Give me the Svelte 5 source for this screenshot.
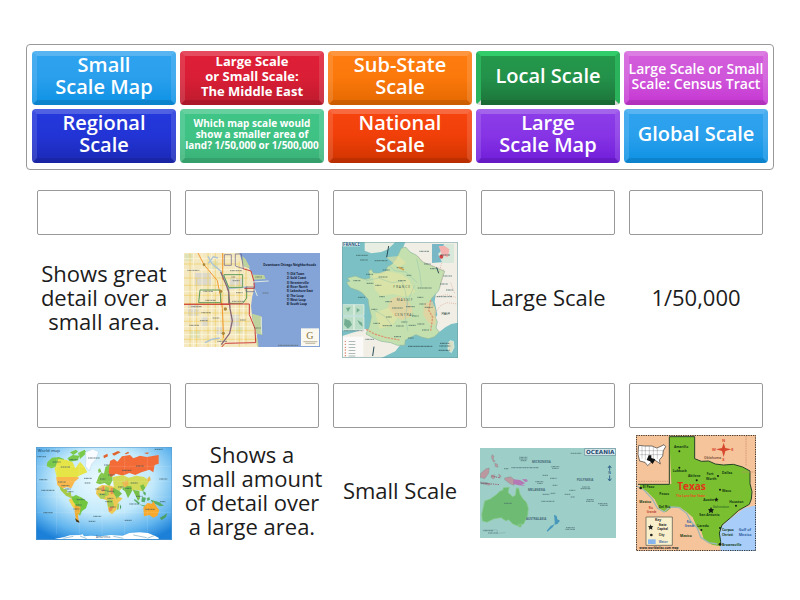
<script>
	let selected = $state(null);

	const tiles = [
		{ lines: ['Small', 'Scale Map'], size: 'large', color: 'sky' },
		{ lines: ['Large Scale', 'or Small Scale:', 'The Middle East'], size: 'compact', color: 'crimson' },
		{ lines: ['Sub-State', 'Scale'], size: 'large', color: 'orange' },
		{ lines: ['Local Scale'], size: 'large', color: 'green' },
		{ lines: ['Large Scale or Small', 'Scale: Census Tract'], size: 'medium', color: 'orchid' },
		{ lines: ['Regional', 'Scale'], size: 'large', color: 'blue' },
		{ lines: ['Which map scale would', 'show a smaller area of', 'land? 1/50,000 or 1/500,000'], size: 'small', color: 'mint' },
		{ lines: ['National', 'Scale'], size: 'large', color: 'red' },
		{ lines: ['Large', 'Scale Map'], size: 'large', color: 'violet' },
		{ lines: ['Global Scale'], size: 'large', color: 'sky' }
	];

	const prompts = [
		{ text: 'Shows great detail over a small area.' },
		{ map: 'chicago' },
		{ map: 'france' },
		{ text: 'Large Scale' },
		{ text: '1/50,000' },
		{ map: 'world' },
		{ text: 'Shows a small amount of detail over a large area.' },
		{ text: 'Small Scale' },
		{ map: 'oceania' },
		{ map: 'texas' }
	];

	// [x, y, width] of place names too small to read
	const franceNames = [[60, 58, 36], [72, 72, 24], [116, 74, 38], [140, 102, 22], [182, 95, 20], [90, 115, 22], [52, 134, 22], [128, 123, 26], [92, 142, 20], [118, 148, 18], [186, 134, 24], [212, 118, 14], [245, 156, 42], [264, 84, 20], [282, 98, 20], [168, 216, 32], [148, 197, 20], [210, 212, 26], [250, 204, 20], [266, 214, 24], [106, 220, 18], [150, 243, 18], [112, 262, 20], [140, 269, 28], [180, 270, 24], [228, 240, 20], [218, 268, 22], [244, 264, 22], [258, 282, 22], [174, 302, 22], [196, 258, 18], [250, 46, 30], [322, 120, 26], [312, 144, 24], [330, 162, 22], [302, 182, 46], [88, 310, 26], [216, 306, 18], [318, 232, 24], [66, 184, 22], [244, 184, 18], [130, 182, 16]];
	const worldNames = [[68, 63, 24], [92, 78, 28], [118, 56, 24], [174, 51, 36], [84, 123, 24], [94, 134, 24], [162, 112, 24], [164, 126, 18], [28, 116, 24], [34, 148, 40], [40, 215, 28], [190, 226, 24], [284, 238, 22], [176, 241, 20], [298, 189, 30], [388, 114, 24], [390, 182, 16], [346, 205, 28], [276, 88, 28], [318, 75, 24], [302, 126, 22], [222, 72, 14], [234, 102, 20], [210, 114, 16], [196, 144, 18], [214, 148, 18], [232, 151, 22], [210, 160, 16], [232, 172, 18], [226, 182, 20], [240, 198, 18], [140, 176, 24], [138, 192, 18], [264, 138, 18], [286, 142, 18], [112, 152, 18], [106, 144, 16], [318, 166, 20], [374, 25, 24], [130, 204, 18], [22, 47, 26]];
	const oceaniaNames = [[130, 46, 24], [130, 51, 24], [134, 56, 18], [226, 74, 24], [228, 79, 20], [200, 100, 16], [222, 109, 20], [178, 119, 24], [184, 124, 16], [230, 130, 14], [200, 157, 20], [224, 154, 14], [196, 178, 40], [280, 145, 18], [266, 157, 18], [284, 165, 12], [318, 135, 24], [314, 140, 30], [332, 173, 22], [330, 178, 24], [366, 185, 28], [372, 190, 24], [270, 257, 26], [268, 262, 30], [84, 184, 24], [284, 34, 32], [14, 124, 22], [22, 266, 30], [36, 273, 30], [84, 80, 14], [106, 77, 82]];
	const texasCities = [
		['Amarillo', 132, 54], ['Lubbock', 128, 125], ['Abilene', 174, 142], ['Fort', 230, 136],
		['Worth', 228, 151], ['Dallas', 276, 132], ['El Paso', 38, 175], ['Waco', 276, 186],
		['Austin', 220, 214], ['Houston', 298, 220], ['San Antonio', 208, 258], ['Laredo', 202, 292],
		['Corpus', 276, 303], ['Christi', 276, 317], ['Brownsville', 276, 347], ['Mexico', 28, 219],
		['Mexico', 150, 320], ['Pecos', 88, 195], ['Del Rio', 86, 235]
	];
	const districts = ['1) Old Town', '2) Gold Coast', '3) Streeterville', '4) River North', '5) Lakeshore East', '6) The Loop', '7) West Loop', '8) South Loop'];

	function toggle(index) {
		selected = selected === index ? null : index;
	}
</script>

{#snippet names(list, color)}
	<g stroke={color} stroke-width="3" stroke-dasharray="4 1 7 1 3 1" opacity="0.65">
		{#each list as [x, y, w]}
			<line x1={x} y1={y} x2={x + w} y2={y} />
		{/each}
	</g>
{/snippet}

{#snippet chicago()}
	<svg class="map wide" viewBox="12 15 408 282" role="img" aria-label="Chicago neighborhoods">
		<path fill="#f3e8bf" d="M12 15h408v282H12z" />
		<path fill="#84a3d6" d="M178 15l6 18 8 22 14 4 12 20 5 45-6 20-4 30 4 36 12 40 6 47h185V15z" />
		<path fill="#dcd9cc" d="M45 75h50v38H45zM150 90h38v24h-38zM24 165h32v38H24zM150 200h30v38h-30zM64 206h20v28H64zM110 236h18v26h-18z" />
		<path fill="#dfe2b8" d="M14 18h24v20H14zM92 40h22v24H92zM30 248h30v22H30zM164 236h24v20h-24z" />
		<path fill="#bdd29c" d="M186 24l10 8 14 26-8 2-14-10zM218 80l34 1 5 12-37 2zM216 197l28 8 3 56-16-4-10-22zM222 248l14 40-4 9z" />
		<g fill="none" stroke="#efcf62" stroke-width="2">
			<path d="M12 48h165M12 90h190M12 112h175M12 142h200M12 195h195M12 220h200M12 248h210M12 274h220" />
			<path d="M30 15v282M50 90v207M84 15v282M106 15v282M128 15v282M178 40v257M198 60v230" />
		</g>
		<g fill="none" stroke="#fff9df" stroke-width="2">
			<path d="M12 32h160M12 65h180M12 130h190M12 182h190M12 207h200M12 236h210M12 260h220M12 286h215" />
			<path d="M40 15v282M66 15v282M95 15v282M118 100v197M166 30v260M190 80v210" />
		</g>
		<path fill="none" stroke="#a9c3d9" stroke-width="4" d="M84 25l12 22 26 22 15 28 8 24M85 46l15-20 14 4M142 122l60-5M75 284l20-10 24-4" />
		<path fill="none" stroke="#f39a35" stroke-width="3" d="M54 15l18 35 40 48 9 45 6 38 4 90M12 168h110M128 15v80" />
		<path fill="none" stroke="#5f9a58" stroke-width="3" d="M132 80h56v38h-42l-14-34zM60 126h62v38H56zM146 122v44h42l12-16V120" />
		<path fill="none" stroke="#8a6876" stroke-width="4" d="M122 72l18 42 6 18 4 50 7 36-8 38-25 34" />
		<path fill="none" stroke="#cb3d38" stroke-width="3" d="M189 62l24 7 9 32 1 20h-30M120 168h88v32l17 42 2 42-92 2-10 11M12 169h138" />
		<path fill="none" stroke="#665c86" stroke-width="2" d="M133 20h21v32h-21zM166 18h18l6 44-24-8zM198 117h24v14h-24z" />
		<path fill="none" stroke="#dce9df" stroke-width="3" d="M218 102l48-3M224 124l8 20M244 207v50" />
		{@render names([[22, 67, 36], [70, 130, 30], [76, 157, 32], [150, 68, 36], [158, 98, 22], [168, 134, 20], [156, 160, 38], [34, 176, 32], [64, 194, 28], [28, 232, 30], [60, 218, 24], [98, 210, 20], [180, 216, 18], [112, 280, 30], [154, 87, 12], [226, 87, 20], [248, 135, 18], [222, 240, 22], [294, 292, 60]], '#59605b')}
		<g fill="#aa883c">
			<circle cx="122" cy="130" r="5" /><circle cx="136" cy="183" r="5" /><circle cx="72" cy="50" r="4" /><circle cx="130" cy="256" r="5" />
		</g>
		<g class="heavy" fill="#101b35" font-size="9">
			<text x="250" y="54">Downtown Chicago Neighborhoods</text>
			{#each districts as district, i}
				<text x="320" y={81 + i * 13}>{district}</text>
			{/each}
		</g>
		<path fill="#fbf9ef" d="M363 241h54v53h-54z" />
		<text class="serif" x="379" y="273" font-size="30" fill="#88733b">G</text>
		<path stroke="#9d9477" stroke-width="2" d="M370 281h42M376 286h30" />
	</svg>
{/snippet}

{#snippet france()}
	<svg class="map square" viewBox="18 18 348 348" role="img" aria-label="Map of France">
		<path fill="#7ac0c4" d="M18 18h348v348H18z" />
		<path fill="#f1eee6" d="M208 18h158v242l-20 4-18 10-18 14-14-6-6-20 14-26-8-40 6-40 20-52-34-10-28-14-14-16-20-14-26-12z" />
		<path fill="#e8eee1" d="M86 18h92l-22 22-20 8-30 4-20-8z" />
		<path fill="#f1eee6" d="M18 300l70-22 40 18 60 12 10 12-20 26-42 20H18z" />
		<path fill="#c4e0ae" stroke="#8fb8a0" stroke-width="2" d="M196 36l14-2 12 14 20 10 18 20 24 10 22 10 20 8-10 30-8 28-22 24-2 18 14 8-2 24 8 20-4 18 10 12-14 14-18 6-20-4-18-8-16 8-16 8-2 16-22 0-20-8-28-4-20-8-26-14 10-22 6-30-6-26-4-26-16-18-12-8-24-8-10-12-2-6 10-2-8-10 24-6 16 6 14 4 14-4-4-22 8-4 6 10 22 2 16-6 4-14 14-8 12-14z" />
		<path fill="#e7e5a1" opacity=".6" d="M110 118l40-14 46 10 24 18 18 36-28 14-40-8-36 6-18-20zM118 230l42-16 28 26-20 30-38 8zM150 64l38-4 22 20-22 14z" />
		<path fill="#edcf9c" opacity=".65" d="M164 188l24-8 28 12 14 30-8 22-24 8-24-12-18-28zM264 202l26-6 10 30-2 42-20-8-16-24z" />
		<path fill="none" stroke="#dc9874" stroke-width="4" stroke-dasharray="7 3" d="M90 280l26 14 32 10 42 8M284 192l-6 30 12 22-6 40" />
		<path fill="none" stroke="#78b7b4" stroke-width="1" d="M90 134l38-8 38 14 32-4 10 30 6 48M114 222l34 20 20 28M146 76l30 28 34 4 34 32M216 286l-8-40 8-54 20-44M242 68l10 46 4 38" />
		<path fill="none" stroke="#d8a793" stroke-width="2" stroke-dasharray="3 3" d="M244 60l20 20 60 22-12 52M320 70l-10 38M344 140l12 32M292 184l40-8 28 8M298 230l14-20 20-10 34 4" />
		{@render names(franceNames, '#355b57')}
		<g fill="#485b50" font-size="10">
			<text x="172" y="156">F R A N C E</text>
			<text x="182" y="196">M A S S I F</text>
			<text x="176" y="241">C E N T R A L</text>
			<text x="316" y="236">ITALY</text>
		</g>
		<path stroke="#d0a54f" stroke-width="5" d="M188 94l16 8" />
		<path stroke="#284c55" stroke-width="3" d="M152 64l6-34M110 360l4-28M302 94l6 18" />
		<path fill="#d8e8da" d="M288 24h66v57h-66z" />
		<path fill="#79b7c6" d="M288 24h36l-6 18-12 12 12 24-30 3z" />
		<path fill="#f3b2ad" d="M308 30h18l14 10-4 24-18-6z" />
		<circle cx="316" cy="62" r="6" fill="#d44546" />
		<path fill="#d8dec4" stroke="#e9f5ed" stroke-width="2" d="M342 314l10 2 2 18-8 16-10-8v-20z" />
		{@render names([[312, 322, 28], [310, 330, 34], [308, 343, 34], [216, 331, 74], [314, 57, 28], [24, 284, 58]], '#263f46')}
		<g fill="#b9ddc6" stroke="#edf5ec" stroke-width="2">
			<path d="M20 206h34v32H20zM54 206h30v32H54zM20 242h34v40H20zM54 242h30v40H54z" />
		</g>
		<path fill="#72ad91" d="M26 248l16 6 6 12-12 12-12-12zM62 216l10 6-10 8zM64 252l14 8 2 12-10-8zM30 216l14-2-8 14z" />
		<path fill="#fff" opacity=".7" d="M20 302h62v60H20z" />
		<g fill="#d97155">
			{#each [316, 325, 334, 342, 351, 359] as y}
				<circle cx="28" cy={y} r="2" />
				<path fill="#879b97" d="M38 {y}h20v2H38z" />
			{/each}
		</g>
		<path fill="#e5f3ef" d="M18 18h54v13H18z" />
		<text class="heavy" x="21" y="30" font-size="13" fill="#26507f">FRANCE</text>
		<path fill="none" stroke="#6aa0a4" stroke-width="2" d="M19 19h346v346H19z" />
	</svg>
{/snippet}

{#snippet world()}
	<svg class="map wide" viewBox="18 18 408 279" role="img" aria-label="World map">
		<defs>
			<radialGradient id="ocean" cx="50%" cy="36%" r="72%">
				<stop offset="0" stop-color="#eefbff" />
				<stop offset=".5" stop-color="#c2e9fb" />
				<stop offset=".8" stop-color="#62b5ee" />
				<stop offset="1" stop-color="#1c80d8" />
			</radialGradient>
		</defs>
		<path fill="url(#ocean)" d="M18 18h408v279H18z" />
		<path fill="#79c94a" d="M52 64l14-14 20-2 16 6v18l-18 4-20 6-14-6zM112 52l16-10 20 2-4 14-24 4zM144 36l20-10 6 10-20 18zM120 34l18-8 6 6-14 10z" />
		<path fill="#e6e548" d="M84 54l24 2 20 8 8 18 14-20 12 14 10 18-20 8-14 8-58-2-6-24 6-16z" />
		<path fill="#f8b84b" d="M78 108h62l8 2-14 12-10 20-14-4-14 6-14-12z" />
		<path fill="#a7ca46" d="M88 136l14 8 10 2-2 10 12-4 2 12 8 4-4 6-20-10-16-16z" />
		<path fill="#f8fbff" stroke="#bddbed" stroke-width="2" d="M166 34l22-10 18 8-8 24-12 12-8 22-12-14 2-24z" />
		<path fill="#72c63f" d="M126 168l12-6 18 8 18 14-6 18-12 8-6 14-12-12-4-24-10-8z" />
		<path fill="#f1d54b" d="M116 176l8-4 12 20 2 14-10-8z" />
		<path fill="#eeae36" d="M134 192l18 6-2 16-6 8 2 18-8-4-4-22z" />
		<path fill="#4b371b" d="M135 232l12 8 2 5-10-3z" />
		<path fill="#82c64b" d="M206 106l8-12 8 4 4-20 14-10 6 12 2 38-10 18-14-10-14 4-12-4zM204 86l6-4 4 10-8 4z" />
		<path fill="#edc853" d="M200 142l16-10 26 2 16 6 10 28 10 4-14 14-6 22-12 12-10-8-6-34-22-8-10-12z" />
		<path fill="#a5cc51" d="M226 136l12 4-2 22-14 6zM204 156l18 2 4 14-14 2zM232 174l16 2 4 20-18 2zM258 150l10 18-10 6zM262 190l6-4-2 18-6 4z" />
		<path fill="#e88e51" d="M242 140l14 2 2 14-16 4zM214 140l8-6 2 14-8 4zM236 200l14-4-4 12-8 4z" />
		<path fill="#f36b37" d="M240 60l12-6 10 8 14-16 24-4 10 10 20-8 20 4 36-6v26l-12 4-4 22-12-8-24 8-18 8-18-6-20 8-20-6-16 10-6-14z" />
		<path fill="#e0642e" d="M220 44l12-6 2 8-12 6zM246 38l18-8 8 4-20 10zM284 38l10-6 4 4-10 4zM342 36l14-2-2 6z" />
		<path fill="#d2da58" d="M248 108l30-6 18 8 22-6 24 4 16 12-10 18-14 12-18-4-16 4-20-12-12 12-16-10z" />
		<path fill="#79bf47" d="M286 134l18 2 2 14-12 22-8-20-10-8zM308 146l20 4 2 22-6 8-8-18zM330 134l10-4 6 10-8 12zM250 140l18 10 8 8-16 14-12-20z" />
		<path fill="#e9b74e" d="M276 124l18-6 2 14-12 8zM352 112l8-6 2 12-10 6z" />
		<path fill="#58ae68" d="M314 174l16 12-4 4-14-12zM336 168l12 2-4 14-10-2zM350 172l8-4 2 8-8 4zM326 190l22 4-4 3zM362 176l26 8 14 10-12 2-24-12zM340 150l8 6-2 8-6-6z" />
		<path fill="#f6a92d" d="M340 200l12-14 14 2 4-8 8 14 10 14-6 16-12 6-12-8-16 4z" />
		<path fill="#4b9f62" d="M390 230l14-8 8-6-4 12-14 10zM270 190l4 8-4 8z" />
		<g fill="none" stroke="#fff" opacity=".35" stroke-width="1">
			<path d="M18 76h408M18 122h408M18 168h408M18 214h408M80 18v262M148 18v262M216 18v262M284 18v262M352 18v262" />
		</g>
		{@render names(worldNames, '#304f58')}
		<path fill="#fff" d="M76 293l24-4 20-6 30-1 8-2 4 6 20-2 30 2 30-4 36 2 20-8 30-2 26 2 20 8 12 6v4H76z" />
		<path stroke="#77abc7" stroke-width="2" d="M100 292l30-6M150 285l20 8M250 286l30 6M310 282l40 8M372 284l-20 8" />
		<path fill="none" stroke="#5b9ccb" stroke-width="2" d="M19 19h406v277H19z" />
		<text x="23" y="33" font-size="13" fill="#173a56">World map</text>
		<text x="198" y="292" font-size="9" fill="#2a4964">Antarctica</text>
	</svg>
{/snippet}

{#snippet oceania()}
	<svg class="map wide" viewBox="12 18 408 270" role="img" aria-label="Map of Oceania">
		<path fill="#9dcec8" d="M12 18h408v270H12z" />
		<path fill="#6ebc73" stroke="#8dcb91" stroke-width="2" d="M26 177l18-7 18-13 10-10 8-2 2 -8 18-1-4 15 14 13 8-4 3-22 7 1 4 17 8 13 12 13 5 17-2 22-12 25-17 6-16-6-12-13-8 4-15-10-22 4-20 10-14-4-2-20zM127 246l10 0-2 9-7 0z" />
		<path fill="#b9989f" stroke="#7f8a8d" stroke-width="1" d="M14 94l16-14 10-2-2 16-12 16-14-4zM46 100l10-2-4 5 8 0-8 8-6-4zM68 96l8 6-6 6zM86 108l18-4 10 8v18l-12-5-16-12zM12 120l18 2 14 5-4 3-24-5zM48 38l6 4-2 10 6 6-6 2-6-14zM56 64l8 2 2 10-8-2z" />
		<path fill="#b678b4" d="M112 112l20 2 16 10-10 3 10 4-20-1-16-4zM138 112l14 0 4 6-8 2z" />
		<path stroke="#9a6578" stroke-width="3" stroke-dasharray="4 3" d="M46 102l28 6M30 124l40 4" />
		<path fill="#4898bd" d="M234 218l8 4 2 10 8 4-8 10-8 2 0-12zM236 246l-6 10-16 13-2-3 12-14z" />
		{@render names(oceaniaNames, '#45646a')}
		<g class="heavy" fill="#466a78" font-size="9">
			<text x="168" y="63">MICRONESIA</text>
			<text x="156" y="147">MELANESIA</text>
			<text x="302" y="118">POLYNESIA</text>
			<text x="150" y="234">AUSTRALASIA</text>
		</g>
		<path stroke="#31668a" stroke-width="3" d="M401 72v14M401 100v16M396 78l5-7 5 7M396 110l5 7 5-7" fill="none" />
		<text class="heavy" x="397" y="97" font-size="10" fill="#31668a">N</text>
		<path fill="none" stroke="#6a9293" d="M20 264l44 0 0 10 24-2" />
		<path fill="#e4f0f2" stroke="#5c8794" stroke-width="2" d="M326 20h93v20h-93z" />
		<text class="title" x="330" y="36" font-size="17" fill="#244d72">OCEANIA</text>
	</svg>
{/snippet}

{#snippet texas()}
	<svg class="map tall" viewBox="18 15 360 348" role="img" aria-label="Map of Texas">
		<path fill="#f6c49a" d="M18 15h360v348H18z" />
		<path fill="#a8cdf8" d="M378 226l-34 8-22 16-26 20-22 20-8 26 6 47h106z" />
		<path fill="#79bf2f" d="M118 20h76v66l20 8 22-1 20 9 24 3 30-2 28 8 22 12 0 38 6 24-2 22-6 16-32 18-24 22-26 22-8 24 4 26 0 14-26-5-24-14-8-26-14-14-12-28-18-16-20-14-22-2-20 16-20-10-14-28-24-24-20-10v-12h94z" />
		<path fill="none" stroke="#9eb8b4" stroke-width="4" d="M20 168l22 12 24 26 16 28 20 12 18-15 26 1 24 18 14 26 18 18 10 28 24 16 26 4" />
		<path fill="none" stroke="#254328" stroke-width="3" d="M24 163h94V20h76v66l20 8 22-1 20 9 24 3 30-2 28 8 22 12 0 38 6 24-2 22-6 16-32 18-24 22-26 22-8 24 4 26v12" />
		<path fill="none" stroke="#c58d70" stroke-width="2" stroke-dasharray="5 2" d="M348 18v90M336 126h40M26 154h90" />
		<path fill="#fff" stroke="#373737" stroke-width="2" d="M26 46l18 2 22 0 14 6 10-4 12-6 5 6-7 12-2 16-10 12 3 12-6-5-10-6-14 8-8 8-8-10-16-4-5-20z" />
		<path stroke="#666" stroke-width="1" fill="none" d="M36 48v38M46 48v42M58 48v38M70 50v38M82 55v32M28 62h74M28 74h70" />
		<path fill="#111" d="M56 76h8v8l12 4-8 14-8-8-10-4z" />
		<g class="heavy" fill="#123812" font-size="10">
			{#each texasCities as [name, x, y]}
				<text {x} {y}>{name}</text>
			{/each}
			<text x="222" y="88" fill="#865b43">Oklahoma</text>
			<text x="248" y="235" fill="#3f7d25">Galveston</text>
		</g>
		<g fill="#151d15">
			<circle cx="148" cy="64" r="3" /><circle cx="148" cy="113" r="3" /><circle cx="200" cy="151" r="3" /><circle cx="264" cy="138" r="3" />
			<circle cx="270" cy="179" r="3" /><circle cx="318" cy="227" r="3" /><circle cx="32" cy="174" r="4" /><circle cx="214" cy="300" r="3" />
			<circle cx="270" cy="294" r="3" /><circle cx="270" cy="343" r="4" />
			<path d="M243 231l3 6 6 1-4 5 1 7-6-4-6 4 1-7-4-5 6-1zM259 202l2 4 5 1-4 3 1 5-4-3-4 3 1-5-4-3 5-1z" />
		</g>
		<text class="heavy" x="142" y="181" font-size="30" fill="#e13518">Texas</text>
		<text class="heavy" x="138" y="200" font-size="9" fill="#e65221">The Lone Star State</text>
		<g fill="#d7472e" font-size="12" class="heavy">
			<path d="M281 38l5 16 18 4-18 5-5 18-5-18-18-5 18-4z" />
			<text x="276" y="36">N</text><text x="277" y="92">S</text><text x="246" y="63">W</text><text x="304" y="63">E</text>
		</g>
		<g class="heavy" font-size="11" fill="#315da3">
			<text x="326" y="302">Gulf of</text><text x="326" y="318">Mexico</text>
		</g>
		<g class="heavy" font-size="8" fill="#315da3">
			<text x="170" y="280">Rio</text><text x="164" y="292">Grande</text>
		</g>
		<path fill="#f9efcb" stroke="#4d4b43" stroke-width="2" d="M48 261h79v85H48z" />
		<g class="heavy" font-size="9" fill="#222">
			<text x="75" y="273" font-size="10">Key</text>
			<text x="86" y="288">State</text><text x="82" y="301">Capital</text>
			<text x="86" y="319">City</text><text x="86" y="339" fill="#5275a5">Water</text>
			<path d="M62 283l2 5 6 1-4 4 1 6-5-3-5 3 1-6-4-4 6-1z" /><circle cx="64" cy="315" r="4" />
			<text x="28" y="358">www.worldatlas.com map</text>
		</g>
		<path fill="#87b5ee" d="M54 328h23v14H54z" />
		<g class="heavy" font-size="8" fill="#b94338"><text x="56" y="237">Rio</text><text x="50" y="249">Grande</text></g>
		<path fill="none" stroke="#222" stroke-width="3" stroke-dasharray="4 3" d="M19 16h358v346H19z" />
	</svg>
{/snippet}

<main>
	<section class="tray" aria-label="Answers">
		{#each tiles as tile, i}
			<button
				type="button"
				class="tile {tile.size} {tile.color}"
				class:selected={selected === i}
				aria-pressed={selected === i}
				onclick={() => toggle(i)}
			>
				{#each tile.lines as line}
					<span>{line}</span>
				{/each}
			</button>
		{/each}
	</section>

	<section class="board" aria-label="Questions">
		{#each prompts as prompt, i}
			<div class="item">
				<button type="button" class="slot" aria-label="Answer {i + 1}"></button>
				<div class="prompt">
					{#if prompt.map === 'chicago'}
						{@render chicago()}
					{:else if prompt.map === 'france'}
						{@render france()}
					{:else if prompt.map === 'world'}
						{@render world()}
					{:else if prompt.map === 'oceania'}
						{@render oceania()}
					{:else if prompt.map === 'texas'}
						{@render texas()}
					{:else}
						<p>{prompt.text}</p>
					{/if}
				</div>
			</div>
		{/each}
	</section>
</main>

<style>
	:global(body) {
		margin: 0;
		background: #fff;
	}

	main {
		padding: 44px 26px 24px;
		font-family: "Open Sans", "Noto Sans", sans-serif;
		color: #1c1c1c;
	}

	.tray {
		display: grid;
		grid-template-columns: repeat(5, 1fr);
		gap: 4px;
		padding: 6px 5px;
		border: 1px solid #999;
		border-radius: 4px;
	}

	.tile {
		display: flex;
		flex-direction: column;
		align-items: center;
		justify-content: center;
		box-sizing: border-box;
		min-width: 0;
		height: 54px;
		padding: 0 0 4px;
		border: 5px solid;
		border-color: rgba(255, 255, 255, 0.2) rgba(255, 255, 255, 0.12) rgba(0, 0, 0, 0.1);
		border-radius: 4px;
		background-origin: border-box;
		color: #fff;
		font-family: inherit;
		font-weight: 600;
		white-space: nowrap;
		cursor: pointer;
	}

	.tile.selected {
		outline: 2px solid #222;
	}

	.large {
		font-size: 20px;
		line-height: 22px;
	}

	.medium {
		font-size: 14px;
		line-height: 15px;
	}

	.compact {
		font-size: 13px;
		line-height: 15px;
		font-weight: 700;
	}

	.small {
		font-size: 10px;
		line-height: 11px;
		font-weight: 700;
	}

	.sky { background-image: linear-gradient(#2fa3ee, #2a9fec 50%, #0c91e4); }
	.crimson { background-image: linear-gradient(#e01f37, #d91e35 50%, #bd1b2e); }
	.orange { background-image: linear-gradient(#ff7c10, #fb780b 50%, #e36800); }
	.green { background-image: linear-gradient(#249a4b, #23914a 50%, #1c7439); border-top-color: #32cd6b; border-right-color: #2ab35a; border-left-color: #2ab35a; }
	.orchid { background-image: linear-gradient(#d35edb, #cf55d9 50%, #c535d3); }
	.blue { background-image: linear-gradient(#2439dd, #2234d5 50%, #1b29b5); }
	.mint { background-image: linear-gradient(#3fc587, #3fc385 50%, #3bb178); }
	.red { background-image: linear-gradient(#f84510, #f03f08 50%, #cf3400); }
	.violet { background-image: linear-gradient(#8d3ee8, #8634e5 50%, #701cda); }

	.board {
		display: grid;
		grid-template-columns: repeat(5, 1fr);
		row-gap: 20px;
		padding: 20px 4px 0;
	}

	.item {
		display: flex;
		flex-direction: column;
		align-items: center;
		min-width: 0;
	}

	.slot {
		box-sizing: border-box;
		align-self: stretch;
		height: 45px;
		margin: 0 7px;
		padding: 0;
		border: 1px solid #999;
		border-radius: 2px;
		background: #fff;
	}

	.prompt {
		display: flex;
		align-items: center;
		justify-content: center;
		width: 100%;
		min-height: 128px;
	}

	p {
		margin: 0 0 4px;
		padding: 0 3px;
		font-size: 22px;
		line-height: 24px;
		text-align: center;
	}

	.map {
		display: block;
		margin-top: 2px;
	}

	.wide {
		width: 136px;
	}

	.square {
		width: 116px;
	}

	.tall {
		width: 120px;
	}

	.heavy {
		font-weight: 700;
	}

	.title {
		font-family: "DejaVu Sans", sans-serif;
		font-weight: 700;
	}

	.serif {
		font-family: "Liberation Serif", serif;
	}
</style>
